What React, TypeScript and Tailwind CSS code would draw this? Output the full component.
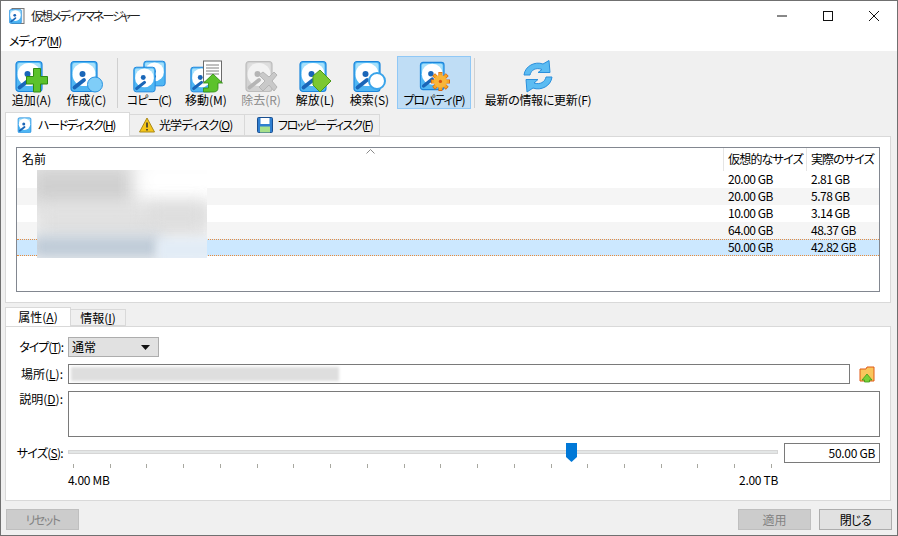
import React from 'react';

const font = '[font-family:"Noto_Sans_CJK_JP","Liberation_Sans",sans-serif] [font-feature-settings:"palt"]';

const Disk = ({ x = 0, y = 0, s = 1, gray = false }: { x?: number; y?: number; s?: number; gray?: boolean }) => (
  <g transform={`translate(${x} ${y}) scale(${s})`}>
    <rect x="1" y="1.5" width="26" height="30" rx="3" fill={gray ? '#d2d2d2' : '#4fb6f3'} stroke={gray ? '#bdbdbd' : '#1c86dc'} strokeWidth="1.2" />
    <rect x="2.5" y="3" width="23" height="11" rx="2" fill={gray ? '#dedede' : '#a6e0fb'} />
    <circle cx="14" cy="14.5" r="11.5" fill={gray ? '#f2f2f2' : '#ffffff'} />
    <circle cx="12.5" cy="14" r="3" fill={gray ? '#b5b5b5' : '#1a66b8'} />
    <path d="M4.5 27.5 L14 20" stroke={gray ? '#b5b5b5' : '#1a66b8'} strokeWidth="3.8" strokeLinecap="round" />
  </g>
);

const Icon = ({ children, w = 33 }: { children: React.ReactNode; w?: number }) => (
  <svg width={w} height="33" viewBox={`0 0 ${w} 33`} className="block">
    {children}
  </svg>
);

const AddIcon = () => (
  <Icon>
    <Disk />
    <path d="M18.5 8.5 h7 v8 h7 v7.5 h-7 v8 h-7 v-8 h-7 v-7.5 h7 z" fill="#5cc22b" stroke="#2f8a12" strokeWidth="1" />
  </Icon>
);

const CreateIcon = () => (
  <Icon>
    <Disk />
    <circle cx="25" cy="24.5" r="7.5" fill="#7fcdf8" stroke="#2a93e0" strokeWidth="1" />
  </Icon>
);

const CopyIcon = () => (
  <Icon>
    <Disk x={10} y={0} s={0.82} />
    <Disk x={0} y={6} s={0.82} />
  </Icon>
);

const MoveIcon = () => (
  <Icon>
    <Disk x={0} y={6} s={0.82} />
    <rect x="13.5" y="1" width="18" height="21" fill="#fff" stroke="#6b6b6b" />
    <path d="M16 5h13M16 8h13M16 11h13M16 14h13" stroke="#808080" />
    <path d="M13.5 32 v-4 h5 v-5 h-5 l9.5 -9 l9.5 9 h-4.5 v5 q0 4 -5 4 z" fill="#5cc22b" stroke="#2f8a12" strokeWidth="0.8" />
  </Icon>
);

const RemoveIcon = () => (
  <Icon>
    <Disk gray />
    <path d="M14 15 l4 -3 l6 5 l5 -5 l3 3 l-5 6 l5 6 l-3 4 l-5 -6 l-6 6 l-4 -4 l6 -6 z" fill="#c9c9c9" stroke="#b5b5b5" />
  </Icon>
);

const ReleaseIcon = () => (
  <Icon>
    <Disk />
    <path d="M21 10 L32 21 L21 32 L14 25 L14 16 z" fill="#7cc832" stroke="#4c9a1a" strokeWidth="1" />
  </Icon>
);

const SearchIcon = () => (
  <Icon>
    <Disk />
    <circle cx="24" cy="21" r="8" fill="#ffffff" stroke="#3aa4ea" strokeWidth="2" />
  </Icon>
);

const GearIcon = () => (
  <Icon>
    <Disk />
    <path d="M23 12v21M12.5 22.5h21M15.5 15l15 15M30.5 15l-15 15" stroke="#d9640f" strokeWidth="4.4" />
    <path d="M23 13v19M13.5 22.5h19M16 15.5l14 14M30 15.5l-14 14" stroke="#f5a623" strokeWidth="3.2" />
    <circle cx="23" cy="22.5" r="7" fill="#f8b53a" />
    <circle cx="23" cy="22.5" r="1.8" fill="#d9540f" />
  </Icon>
);

const RefreshIcon = () => (
  <Icon>
    <path d="M2 15 C3 6 13 1 21 4 L27 0.5 L28 12.5 L16 12.5 L20 9.5 C14 7 9 10 8 15 z" fill="#5cbcf2" stroke="#2a8fdc" strokeWidth="1" />
    <path d="M30 17 C29 26 19 31 11 28 L5 32 L4 19.5 L16 19.5 L12 23 C18 25 23 22 24 17 z" fill="#5cbcf2" stroke="#2a8fdc" strokeWidth="1" />
  </Icon>
);

const tools = [
  { label: '追加(A)', icon: <AddIcon />, w: 'w-[55px]' },
  { label: '作成(C)', icon: <CreateIcon />, w: 'w-[55px]' },
  { sep: true },
  { label: 'コピー(C)', icon: <CopyIcon />, w: 'w-[58px]', t: 'tracking-[-1px]' },
  { label: '移動(M)', icon: <MoveIcon />, w: 'w-[56px]' },
  { label: '除去(R)', icon: <RemoveIcon />, w: 'w-[54px]', off: true },
  { label: '解放(L)', icon: <ReleaseIcon />, w: 'w-[54px]' },
  { label: '検索(S)', icon: <SearchIcon />, w: 'w-[55px]' },
  { label: 'プロパティ(P)', icon: <GearIcon />, w: 'w-[74px]', on: true, t: 'tracking-[-1px]' },
  { sep: true },
  { label: '最新の情報に更新(F)', icon: <RefreshIcon />, w: 'w-[122px]', t: 'tracking-[-0.3px]' },
];

const rows = [
  ['20.00 GB', '2.81 GB'],
  ['20.00 GB', '5.78 GB'],
  ['10.00 GB', '3.14 GB'],
  ['64.00 GB', '48.37 GB'],
  ['50.00 GB', '42.82 GB'],
];

const ticks = Array.from({ length: 20 }, (_, i) => i);

const DiskTab = () => (
  <svg width="15" height="16" viewBox="0 0 28 32">
    <Disk />
  </svg>
);

const WarnTab = () => (
  <svg width="16" height="16" viewBox="0 0 16 16">
    <path d="M8 1 L15.5 15 H0.5 z" fill="#f5c518" stroke="#a8891a" />
    <path d="M8 5.5v5M8 12v1.6" stroke="#333" strokeWidth="1.6" />
  </svg>
);

const FloppyTab = () => (
  <svg width="16" height="16" viewBox="0 0 16 16">
    <rect x="0.5" y="0.5" width="15" height="15" rx="1" fill="#2f7fd0" stroke="#1a4f90" />
    <rect x="3.5" y="1" width="9" height="6" fill="#fff" />
    <rect x="3" y="9.5" width="10" height="6" fill="#a6e08a" />
  </svg>
);

const Btn = ({ children, off = false, t = '' }: { children: React.ReactNode; off?: boolean; t?: string }) => (
  <div
    className={`w-[73px] h-[21px] flex items-center justify-center border text-xs ${t} ${
      off ? 'bg-[#cccccc] border-[#bfbfbf] text-[#838383]' : 'bg-[#e1e1e1] border-[#adadad] text-black'
    }`}
  >
    {children}
  </div>
);

const Label = ({ children, t = '' }: { children: React.ReactNode; t?: string }) => (
  <div className={`w-[52px] shrink-0 text-right text-xs text-black whitespace-nowrap ${t}`}>{children}</div>
);

export default function App() {
  return (
    <div className={`w-[898px] h-[536px] overflow-hidden bg-[#f0f0f0] border-x border-b border-t border-[#707070] flex flex-col text-xs text-black ${font}`}>
      {/* title bar */}
      <div className="h-[29px] shrink-0 bg-white flex items-center pl-[8px]">
        <svg width="16" height="16" viewBox="0 0 16 16">
          <rect x="3" y="0.5" width="12" height="15" fill="#f4f4f4" stroke="#777" />
          <g transform="scale(0.46) translate(0 2)">
            <Disk />
          </g>
        </svg>
        <span className="ml-[6px] text-xs text-[#222] tracking-[-2px]">仮想メディアマネージャー</span>
        <div className="ml-auto flex items-center">
          <svg width="46" height="29" viewBox="0 0 46 29"><path d="M18 15h10" stroke="#111" /></svg>
          <svg width="46" height="29" viewBox="0 0 46 29"><rect x="18.5" y="10.5" width="9" height="9" fill="none" stroke="#111" /></svg>
          <svg width="46" height="29" viewBox="0 0 46 29"><path d="M18 10l10 10M28 10l-10 10" stroke="#111" /></svg>
        </div>
      </div>

      {/* menu */}
      <div className="h-[21px] shrink-0 bg-white pl-[8px] flex items-center text-xs tracking-[-1px]">
        メディア(<u>M</u>)
      </div>

      {/* toolbar */}
      <div className="h-[62px] shrink-0 flex items-start pl-[3px] pt-[5px]">
        {tools.map((t, i) =>
          t.sep ? (
            <div key={i} className="w-[6px] h-[53px] flex justify-center">
              <div className="w-px h-[50px] mt-[2px] bg-[#d0d0d0]" />
            </div>
          ) : (
            <div
              key={i}
              className={`${t.w} h-[53px] shrink-0 flex flex-col items-center pt-[4px] whitespace-nowrap ${
                t.on ? 'border border-[#90c8f6] bg-[#bfddf5] pt-[3px]' : ''
              } ${t.off ? 'text-[#8c8c8c]' : ''}`}
            >
              {t.icon}
              <span className={`leading-[16px] ${t.t ?? ''} ${t.on ? 'mt-[1px]' : '-mt-[1px]'}`}>{t.label}</span>
            </div>
          ),
        )}
      </div>

      {/* disk tabs */}
      <div className="h-[23px] shrink-0 flex items-end pl-[4px] relative z-10 whitespace-nowrap">
        <div className="w-[125px] h-[24px] bg-white border border-b-0 border-[#d9d9d9] flex items-center pl-[11px] gap-[6px]">
          <DiskTab />
          <span className="tracking-[-1.4px]">ハードディスク(<u>H</u>)</span>
        </div>
        <div className="w-[115px] h-[22px] bg-[#f0f0f0] border-y border-r border-[#d9d9d9] flex items-center pl-[9px] gap-[4px]">
          <WarnTab />
          <span className="tracking-[-1px]">光学ディスク(<u>O</u>)</span>
        </div>
        <div className="w-[135px] h-[22px] bg-[#f0f0f0] border-y border-r border-[#d9d9d9] flex items-center pl-[12px] gap-[5px]">
          <FloppyTab />
          <span className="tracking-[-1.3px]">フロッピーディスク(<u>F</u>)</span>
        </div>
      </div>

      {/* disk list panel */}
      <div className="h-[167px] shrink-0 mx-[4px] w-[886px] bg-white border border-[#d9d9d9] pt-[10px] pl-[10px]">
        <div className="relative w-[864px] h-[145px] border border-[#828790] bg-white">
          <div className="h-[23px] flex text-xs whitespace-nowrap">
            <div className="w-[707px] pl-[5px] pt-[3px] border-r border-[#e5e5e5]">名前</div>
            <div className="w-[83px] pl-[4px] pt-[3px] border-r border-[#e5e5e5] tracking-[-0.8px]">仮想的なサイズ</div>
            <div className="flex-1 pl-[4px] pt-[3px] tracking-[-0.9px]">実際のサイズ</div>
          </div>
          <svg width="9" height="5" viewBox="0 0 9 5" className="absolute left-[349px] top-[1px]">
            <path d="M0.5 4.5L4.5 0.5L8.5 4.5" fill="none" stroke="#8a8a8a" />
          </svg>
          <div>
            {rows.map((r, i) => (
              <div
                key={i}
                className={`h-[17px] flex items-center pb-[2px] text-xs tracking-[-0.5px] [font-feature-settings:normal] ${
                  i === 4
                    ? 'bg-[#cce8ff] border-y border-dotted border-[#e98b3c]'
                    : i % 2 === 1
                      ? 'bg-[#f5f5f5]'
                      : 'bg-white'
                }`}
              >
                <div className="w-[707px]" />
                <div className="w-[83px] pl-[4px]">{r[0]}</div>
                <div className="pl-[4px]">{r[1]}</div>
              </div>
            ))}
          </div>
          {/* blurred names */}
          <div className="absolute left-[20px] top-[22px] w-[170px] h-[88px] overflow-hidden bg-[#f4f4f4]">
            <div className="absolute left-[-10px] top-[-6px] w-[110px] h-[44px] bg-[#d0d0d0] blur-[10px]" />
            <div className="absolute left-[100px] top-[-10px] w-[90px] h-[40px] bg-white blur-[10px]" />
            <div className="absolute left-[0px] top-[36px] w-[170px] h-[30px] bg-[#dfdfdf] blur-[9px]" />
            <div className="absolute left-[110px] top-[34px] w-[60px] h-[18px] bg-[#dddddd] blur-[8px]" />
            <div className="absolute left-[-6px] top-[66px] w-[130px] h-[22px] bg-[#bcc9d6] blur-[7px]" />
            <div className="absolute left-[120px] top-[68px] w-[60px] h-[24px] bg-[#e2ecf6] blur-[5px]" />
          </div>
        </div>
      </div>

      {/* detail tabs */}
      <div className="h-[23px] shrink-0 flex items-end pl-[4px] relative z-10">
        <div className="w-[66px] h-[19px] bg-white border border-b-0 border-[#d9d9d9] flex items-center justify-center">
          属性(<u>A</u>)
        </div>
        <div className="w-[55px] h-[17px] border-y border-r border-[#d9d9d9] flex items-center justify-center">
          情報(<u>I</u>)
        </div>
      </div>

      {/* detail panel */}
      <div className="w-[886px] h-[175px] mx-[4px] shrink-0 bg-white border border-[#d9d9d9] pt-[10px] pl-[5px] flex flex-col">
        <div className="flex items-center h-[20px]">
          <Label t="tracking-[-1px]">タイプ(<u>T</u>):</Label>
          <div className="ml-[5px] w-[91px] h-[20px] bg-[#e1e1e1] border border-[#adadad] flex items-center pl-[3px] pr-[8px]">
            <span className="flex-1">通常</span>
            <svg width="9" height="5" viewBox="0 0 9 5"><path d="M0 0h9L4.5 5z" fill="#111" /></svg>
          </div>
        </div>
        <div className="flex items-center h-[20px] mt-[7px]">
          <Label>場所(<u>L</u>):</Label>
          <div className="ml-[5px] w-[782px] h-[20px] border border-[#7a7a7a] flex items-center pl-[2px] overflow-hidden">
            <div className="w-[268px] h-[14px] bg-[#dedede] blur-[1.5px]" />
          </div>
          <svg width="17" height="17" viewBox="0 0 17 17" className="ml-[9px]">
            <path d="M1 3 h6 l1 -2 h7 v14 H1 z" fill="#f9c65c" stroke="#e05a16" />
            <path d="M3 14 l5 -6 l5 6 h-2.5 v2 h-5 v-2 z" fill="#78d038" stroke="#3f9a1a" strokeWidth="0.8" />
          </svg>
        </div>
        <div className="flex items-start h-[46px] mt-[7px]">
          <Label>説明(<u>D</u>):</Label>
          <div className="ml-[5px] w-[812px] h-[46px] border border-[#7a7a7a]" />
        </div>
        <div className="flex items-start h-[21px] mt-[6px]">
          <div className="h-[20px] flex items-center">
            <Label t="tracking-[-0.7px]">サイズ(<u>S</u>):</Label>
          </div>
          <div className="relative ml-[5px] w-[710px] h-[21px]">
            <div className="mt-[7px] h-[4px] bg-[#e3e6e6] border border-[#d6d6d6]" />
            <svg width="11" height="19" viewBox="0 0 11 19" className="absolute left-[498px] top-0">
              <path d="M0 0h11v14l-5.5 5L0 14z" fill="#0078d7" />
            </svg>
          </div>
          <div className="ml-[6px] w-[96px] h-[20px] border border-[#7a7a7a] flex items-center justify-end pr-[4px] [font-feature-settings:normal] tracking-[-0.3px]">
            50.00 GB
          </div>
        </div>
        <div className="ml-[62px] w-[699px] flex justify-between h-[4px]">
          {ticks.map((t) => (
            <div key={t} className="w-px h-[4px] bg-[#a8a8a0]" />
          ))}
        </div>
        <div className="ml-[57px] w-[710px] flex justify-between mt-[4px] [font-feature-settings:normal] tracking-[-0.3px]">
          <span>4.00 MB</span>
          <span>2.00 TB</span>
        </div>
      </div>

      {/* bottom buttons */}
      <div className="flex items-center mt-[8px] pl-[5px] pr-[5px]">
        <Btn off t="tracking-[-1.5px]">リセット</Btn>
        <div className="ml-auto" />
        <Btn off>適用</Btn>
        <div className="w-[8px]" />
        <Btn t="tracking-[-0.5px]">閉じる</Btn>
      </div>
    </div>
  );
}
